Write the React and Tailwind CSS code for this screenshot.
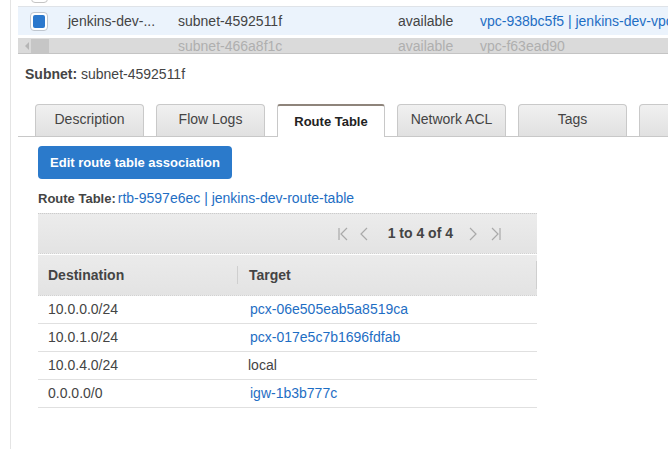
import React from 'react';

const font = { fontFamily: '"Liberation Sans", Arial, Helvetica, sans-serif' };

const routes = [
  { dest: '10.0.0.0/24', target: 'pcx-06e505eab5a8519ca', link: true },
  { dest: '10.0.1.0/24', target: 'pcx-017e5c7b1696fdfab', link: true },
  { dest: '10.0.4.0/24', target: 'local', link: false },
  { dest: '0.0.0.0/0', target: 'igw-1b3b777c', link: true },
];

const tabs = ['Description', 'Flow Logs', 'Route Table', 'Network ACL', 'Tags', ''];

const PagerIcon = ({ kind }) => {
  const paths = {
    first: 'M2 1v12M10 1L4 7l6 6',
    prev: 'M8 1L2 7l6 6',
    next: 'M2 1l6 6-6 6',
    last: 'M2 1l6 6-6 6M10 1v12',
  };
  return (
    <svg width="12" height="14" viewBox="0 0 12 14" fill="none" stroke="#a9a9a9" strokeWidth="1.2">
      <path d={paths[kind]} />
    </svg>
  );
};

const App = () => {
  return (
    <div className="w-[668px] h-[449px] overflow-hidden bg-white pl-[10px] text-[14px] text-[#444]" style={font}>
      <div className="h-full border-l border-[#e4e4e4] pl-[7px]">
        {/* previous row edge */}
        <div className="h-[6px] overflow-hidden pl-[13px]">
          <div className="w-[17px] h-[17px] -mt-[14px] rounded-[4px] border border-[#c4c4c4] bg-white"></div>
        </div>

        {/* selected row */}
        <div className="h-[29px] flex items-center bg-[#ebf3fc] border-t border-[#dfe3e8] pl-[12px] whitespace-nowrap">
          <div className="w-[18px] h-[19px] shrink-0 rounded-[4px] border border-[#bfc6cf] bg-white flex items-center justify-center">
            <div className="w-[12px] h-[13px] rounded-[2px] bg-[#2b78cd]"></div>
          </div>
          <div className="w-[110px] shrink-0 ml-[20px]">jenkins-dev-...</div>
          <div className="w-[220px] shrink-0">subnet-4592511f</div>
          <div className="w-[82px] shrink-0">available</div>
          <div className="shrink-0 text-[#1e6ec4]">vpc-938bc5f5 | jenkins-dev-vpc</div>
        </div>

        {/* horizontal scrollbar over next row */}
        <div className="mt-[3px] h-[16px] flex items-center bg-[#dadada] border-b border-[#c4c4c4] overflow-hidden whitespace-nowrap leading-[15px] pt-[1px]">
          <div className="w-[12px] h-full shrink-0 flex items-center justify-end pr-[1px]">
            <div className="w-0 h-0 border-y-[4px] border-y-transparent border-r-[4px] border-r-[#b5b5b5]"></div>
          </div>
          <div className="w-[18px] h-full shrink-0 bg-[#c6c6c6] ml-[1px]"></div>
          <div className="w-[129px] shrink-0"></div>
          <div className="w-[220px] shrink-0 text-[#afafaf]">subnet-466a8f1c</div>
          <div className="w-[82px] shrink-0 text-[#afafaf]">available</div>
          <div className="shrink-0 text-[#afafaf]">vpc-f63ead90</div>
        </div>

        {/* subnet label */}
        <div className="mt-[12px] pl-[7px] leading-[16px]">
          <span className="font-bold">Subnet:</span> subnet-4592511f
        </div>

        {/* tabs */}
        <div className="mt-[22px] h-[33px] flex items-end gap-[12px] pl-[17px] border-b border-[#c8c8c8]">
          {tabs.map((t) =>
            t === 'Route Table' ? (
              <div
                key={t}
                className="w-[108px] h-[33px] -mb-px shrink-0 flex items-center justify-center bg-white border-x border-[#c8c8c8] border-t-2 border-t-[#8e847b] rounded-t-[3px] font-bold text-[13px] text-[#222] pt-[1px]"
              >
                {t}
              </div>
            ) : (
              <div
                key={t || 'more'}
                className="w-[109px] h-[32px] shrink-0 flex items-center justify-center bg-gradient-to-b from-[#f0f0f0] to-[#e1e1e1] border border-b-0 border-[#c9c9c9] rounded-t-[4px] pb-[2px]"
              >
                {t}
              </div>
            )
          )}
        </div>

        {/* route table panel */}
        <div className="pl-[20px]">
          <button className="mt-[9px] w-[194px] h-[33px] rounded-[4px] bg-[#2b7acb] text-white font-bold text-[13px]">
            Edit route table association
          </button>

          <div className="mt-[11px] leading-[16px]">
            <span className="font-bold text-[13px]">Route Table:</span>
            <span className="ml-[2px] text-[#1e6ec4]">rtb-9597e6ec | jenkins-dev-route-table</span>
          </div>

          <div className="mt-[6px] w-[499px]">
            {/* pager */}
            <div className="h-[41px] flex items-center justify-end pr-[35px] bg-gradient-to-b from-[#ececec] to-[#e3e3e3] border-t border-[#cccccc] border-b border-b-[#d2d2d2] border-dotted">
              <div className="flex items-center">
                <PagerIcon kind="first" />
                <div className="ml-[10px]"><PagerIcon kind="prev" /></div>
                <span className="ml-[17px] font-bold">1 to 4 of 4</span>
                <div className="ml-[15px]"><PagerIcon kind="next" /></div>
                <div className="ml-[10px]"><PagerIcon kind="last" /></div>
              </div>
            </div>

            {/* header */}
            <div className="mt-px h-[41px] flex items-center bg-gradient-to-b from-[#ebebeb] to-[#e3e3e3] border-b border-dotted border-[#d2d2d2] font-bold">
              <div className="w-[199px] pl-[10px]">Destination</div>
              <div className="w-px h-[18px] bg-[#cfcfcf]"></div>
              <div className="flex-1 pl-[11px]">Target</div>
              <div className="w-px h-[28px] bg-[#cfcfcf]"></div>
            </div>

            {/* rows */}
            {routes.map((r) => (
              <div key={r.dest} className="h-[28px] flex items-center border-b border-[#e0e0e0]">
                <div className="w-[200px] pl-[10px]">{r.dest}</div>
                <div className={r.link ? 'pl-[12px] text-[#1e6ec4]' : 'pl-[10px]'}>{r.target}</div>
              </div>
            ))}
          </div>
        </div>
      </div>
    </div>
  );
};

export default App;
